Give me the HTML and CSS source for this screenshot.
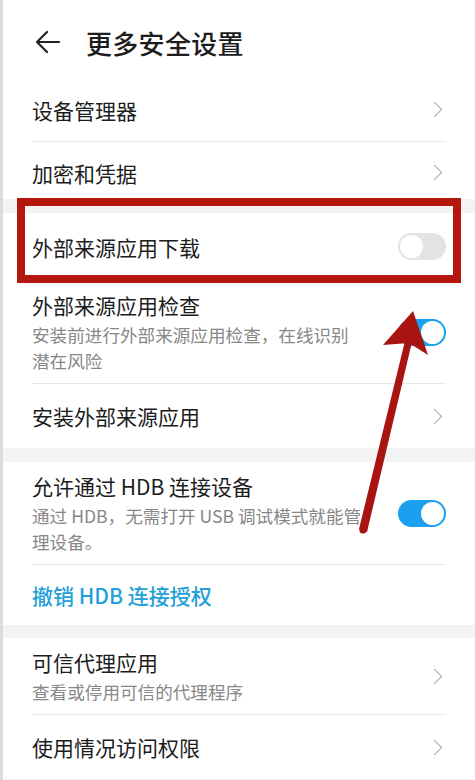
FILE: index.html
```html
<!DOCTYPE html>
<html lang="zh-CN">
<head>
    <meta charset="UTF-8">
    <meta name="viewport" content="width=device-width, initial-scale=1.0">
    <title>更多安全设置</title>
    <link rel="stylesheet" href="styles.css">
</head>
<body>
    <div class="page">
        <header class="top-bar">
            <svg class="back-icon" viewBox="0 0 26 24" width="26" height="24">
                <path d="M24 12H2M12 2L2 12l10 10" fill="none" stroke="#222" stroke-width="2.2" stroke-linecap="round" stroke-linejoin="round"/>
            </svg>
            <h1>更多安全设置</h1>
        </header>

        <div class="group">
            <div class="item">
                <span class="title">设备管理器</span>
                <span class="chevron"></span>
            </div>
            <div class="item item-short">
                <span class="title">加密和凭据</span>
                <span class="chevron"></span>
            </div>
        </div>

        <div class="group">
            <div class="item item-switch">
                <span class="title">外部来源应用下载</span>
                <span class="switch"></span>
            </div>
            <div class="item item-multi">
                <div class="text">
                    <div class="title">外部来源应用检查</div>
                    <div class="sub">安装前进行外部来源应用检查，在线识别潜在风险</div>
                </div>
                <span class="switch on"></span>
            </div>
            <div class="item">
                <span class="title">安装外部来源应用</span>
                <span class="chevron"></span>
            </div>
        </div>

        <div class="group group-thin">
            <div class="item item-multi">
                <div class="text">
                    <div class="title">允许通过 HDB 连接设备</div>
                    <div class="sub">通过 HDB，无需打开 USB 调试模式就能管理设备。</div>
                </div>
                <span class="switch on"></span>
            </div>
            <div class="item item-link">
                <span class="title link">撤销 HDB 连接授权</span>
            </div>
        </div>

        <div class="group">
            <div class="item item-multi">
                <div class="text">
                    <div class="title">可信代理应用</div>
                    <div class="sub">查看或停用可信的代理程序</div>
                </div>
                <span class="chevron"></span>
            </div>
            <div class="item">
                <span class="title">使用情况访问权限</span>
                <span class="chevron"></span>
            </div>
        </div>

        <!-- annotation overlays -->
        <div class="mark-box"></div>
        <svg class="mark-arrow" viewBox="0 0 475 780" width="475" height="780">
            <polygon points="413,311 428,355 409,343 383,345" fill="#a8140f"/>
            <polygon points="405,341 412,342 367,532 359,529" fill="#a8140f"/>
            <circle cx="363" cy="530" r="3.6" fill="#a8140f"/>
        </svg>
    </div>
</body>
</html>
```

FILE: styles.css
```css
* {
    margin: 0;
    padding: 0;
    box-sizing: border-box;
}

body {
    background: #fff;
    font-family: "Noto Sans CJK SC", "Noto Sans", sans-serif;
    color: #1c1c1c;
}

.page {
    position: relative;
    width: 475px;
    height: 780px;
    overflow: hidden;
    border-left: 3px solid #dcdcdc;
}

.top-bar {
    display: flex;
    align-items: center;
    height: 78px;
    padding: 6px 0 0 32px;
}

.back-icon {
    flex: none;
}

.top-bar h1 {
    margin-left: 25px;
    font-size: 26px;
    font-weight: 500;
    letter-spacing: 0.3px;
}

.group {
    border-bottom: 14px solid #f3f3f3;
}

.group-thin {
    border-bottom-width: 13px;
}

.group:last-child {
    border-bottom: none;
}

.item {
    display: flex;
    align-items: center;
    justify-content: space-between;
    min-height: 64px;
    margin: 0 29px;
    border-bottom: 1px solid #e9e9e9;
}

.group .item:last-child {
    border-bottom: none;
}

.group:last-child .item:last-child {
    border-bottom: 1px solid #e9e9e9;
}

.item-short {
    min-height: 57px;
    padding-top: 4px;
}

.item-switch {
    min-height: 68px;
}

.item-link {
    min-height: 60px;
}

.item-multi {
    padding: 10px 0 9px;
}

.text {
    flex: 1;
    padding-right: 33px;
}

.title {
    font-size: 21px;
    line-height: 28px;
}

.sub {
    margin-top: 3px;
    font-size: 17.6px;
    line-height: 26px;
    color: #878787;
}

.link {
    color: #23a0d8;
    font-weight: 500;
}

.chevron {
    flex: none;
    width: 11px;
    height: 11px;
    margin-right: 6px;
    border-top: 1.6px solid #a8a8a8;
    border-right: 1.6px solid #a8a8a8;
    transform: rotate(45deg);
}

.switch {
    flex: none;
    position: relative;
    width: 48px;
    height: 27px;
    border-radius: 14px;
    background: #e3e3e3;
}

.switch::after {
    content: "";
    position: absolute;
    top: 2px;
    left: 2px;
    width: 23px;
    height: 23px;
    border-radius: 50%;
    background: #fff;
}

.switch.on {
    background: #1ba0ef;
}

.switch.on::after {
    left: auto;
    right: 2px;
}

.mark-box {
    position: absolute;
    left: 14px;
    top: 198px;
    width: 444px;
    height: 85px;
    border: 8px solid #b3170e;
}

.mark-arrow {
    position: absolute;
    left: -3px;
    top: 0;
    pointer-events: none;
}
```
